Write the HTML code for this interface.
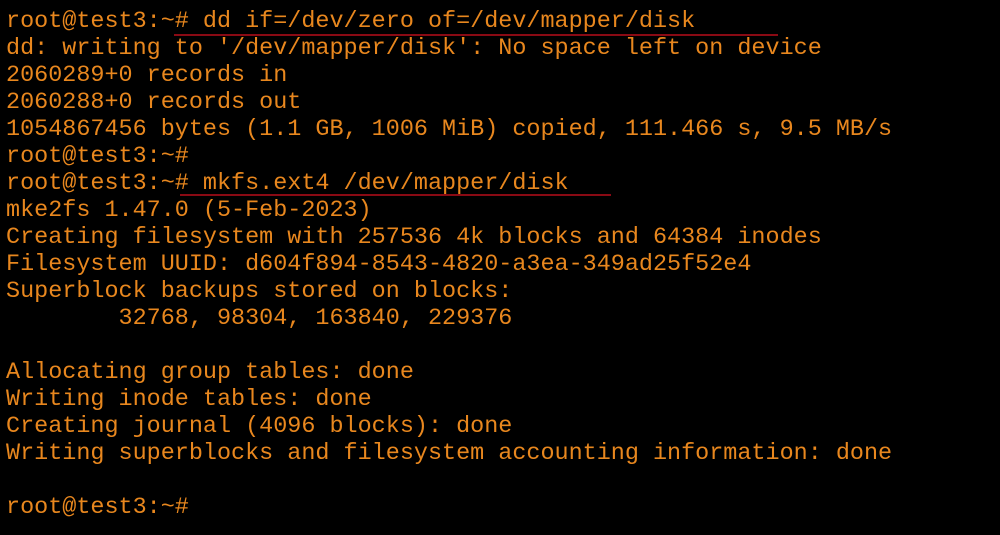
<!DOCTYPE html><html><head><style>
body{margin:0;background:#000;width:1000px;height:535px;overflow:hidden;position:relative}
pre{margin:0;position:absolute;left:6px;top:8px;font-family:"Liberation Mono",monospace;font-size:23.45px;line-height:27px;color:#e8871e}
.u{position:absolute;height:2px;background:#8a0a14}
</style></head><body>
<pre>root@test3:~# dd if=/dev/zero of=/dev/mapper/disk
dd: writing to '/dev/mapper/disk': No space left on device
2060289+0 records in
2060288+0 records out
1054867456 bytes (1.1 GB, 1006 MiB) copied, 111.466 s, 9.5 MB/s
root@test3:~#
root@test3:~# mkfs.ext4 /dev/mapper/disk
mke2fs 1.47.0 (5-Feb-2023)
Creating filesystem with 257536 4k blocks and 64384 inodes
Filesystem UUID: d604f894-8543-4820-a3ea-349ad25f52e4
Superblock backups stored on blocks:
        32768, 98304, 163840, 229376

Allocating group tables: done
Writing inode tables: done
Creating journal (4096 blocks): done
Writing superblocks and filesystem accounting information: done

root@test3:~#</pre>
<div class="u" style="left:174px;top:34px;width:604px"></div>
<div class="u" style="left:180px;top:194px;width:431px"></div>
</body></html>
